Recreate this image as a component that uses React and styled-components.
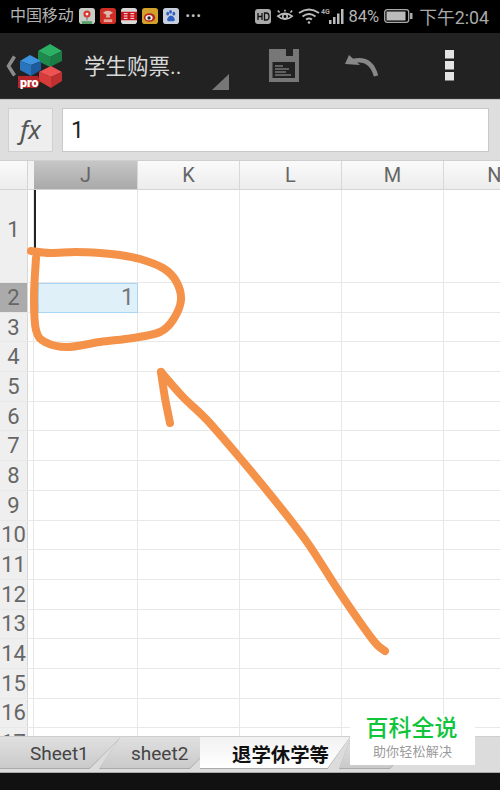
import React from "react";
import styled, { createGlobalStyle } from "styled-components";

const Global = createGlobalStyle`
  html, body { margin: 0; padding: 0; background: #111; }
  * { box-sizing: border-box; }
`;
const FONT = `"Roboto", "Noto Sans CJK SC", sans-serif`;

const Screen = styled.div`
  position: relative; width: 500px; height: 790px; overflow: hidden;
  display: flex; flex-direction: column; font-family: ${FONT}; background: #fff;
`;
const StatusBar = styled.div`
  height: 33px; flex: none; background: #000; color: #b4b4b4;
  display: flex; align-items: center; justify-content: space-between; padding: 0 11px 1px 10px; font-size: 15.5px;
`;
const StatusGroup = styled.div`
  display: flex; align-items: center;
`;
const Carrier = styled.span`
  margin-right: 5px; font-size: 16px; line-height: 1; letter-spacing: -0.1px;
`;
const AppIcon = styled.svg`
  width: 16px; height: 16px; flex: none; margin-right: 5px;
`;
const Dots = styled.span`
  margin-left: 2px; font-size: 13px; letter-spacing: 1px; color: #c4c4c4; line-height: 1; transform: translateY(-1px);
`;
const Percent = styled.span`
  font-size: 16.500px; margin: 0 5px 0 4px;
`;
const Clock = styled.span`
  font-size: 17.800px; margin-left: 6px; color: #aaa;
`;
const StatusGlyph = styled.svg`
  flex: none; margin-right: ${p => p.$mr ?? 0}px;
`;
const Toolbar = styled.div`
  height: 66px; flex: none; background: #222; border-bottom: 1px solid #333;
  display: flex; align-items: center; padding-left: 5px; position: relative;
`;
const Title = styled.span`
  color: #d8d8d8; font-size: 21.500px; margin-left: 20px; width: 114px; white-space: nowrap; transform: translateY(-1px);
`;
const Corner = styled.svg`
  width: 18px; height: 18px; flex: none; align-self: flex-end; margin: 0 0 7px 14px;
`;
const ToolIcon = styled.svg`
  flex: none; margin-left: ${p => p.$ml}px;
`;
const FormulaBar = styled.div`
  height: 62px; flex: none; background: #dedede; border-top: 1px solid #c4c4c4; border-bottom: 1px solid #cfcfcf;
  display: flex; align-items: center; padding: 0 11px 0 8px; gap: 9px;
`;
const FxButton = styled.div`
  width: 45px; height: 44px; flex: none; background: #eee; border: 1px solid #d0d0d0;
  font-family: "Noto Sans", sans-serif; font-style: italic; font-size: 26px; color: #555;
  display: flex; align-items: center; justify-content: center; padding-bottom: 3px;
`;
const FormulaInput = styled.div`
  flex: 1; height: 44px; background: #fff; border: 1px solid #c8c8c8; color: #222;
  font-size: 23px; display: flex; align-items: center; padding-left: 8px;
`;
const HeaderRow = styled.div`
  display: flex; height: 29px; flex: none; border-bottom: 1px solid #d4d4d4; overflow: hidden;
  background: linear-gradient(#fafafa, #ececec);
`;
const CornerCell = styled.div`
  width: 28px; flex: none; border-right: 1px solid #d4d4d4;
`;
const SpacerCell = styled.div`
  width: 6px; flex: none; background: #f3f3f3;
`;
const ColHead = styled.div`
  width: ${p => p.$w}px; flex: none; display: flex; align-items: center; justify-content: center;
  font-size: 20px; color: #666; border-right: 1px solid #d8d8d8;
  background: ${p => p.$active ? "linear-gradient(#c6c6c6, #a9a9a9)" : "none"};
`;
const Row = styled.div`
  display: flex; height: ${p => p.$h}px; flex: none; border-bottom: 1px solid #e8e8e8;
`;
const RowHead = styled.div`
  width: 28px; flex: none; background: ${p => p.$active ? "#ababab" : "#efefef"};
  border-right: 1px solid #d8d8d8; color: #666; font-size: 22px;
  display: flex; align-items: center; justify-content: center; padding-bottom: ${p => p.$lift ?? 0}px;
`;
const Spacer = styled.div`
  width: 6px; flex: none; background: #fff; border-right: 1px solid #e8e8e8;
  box-shadow: ${p => p.$cursor ? "2px 0 0 #222" : "none"};
`;
const Cell = styled.div`
  width: ${p => p.$w}px; flex: none; border-right: 1px solid #e8e8e8;
`;
const SelectedCell = styled(Cell)`
  background: #dff0f9; border: 1px solid #a9d6f5; margin-left: 4px; height: calc(100% + 1px);
  color: #777; font-size: 23px; text-align: right; padding: 0 3px 0 0; line-height: 27px;
`;
const Sheet = styled.div`
  flex: 1; min-height: 0; overflow: hidden;
`;
const TabBar = styled.div`
  position: relative; height: 37px; flex: none; background: #dcdcdc; display: flex;
  border-top: 1px solid #cfcfcf; border-bottom: 1px solid #aaa;
`;
const Tab = styled.div`
  position: relative; flex: none; width: ${p => p.$w}px; height: 32px; margin-left: ${p => p.$ml ?? 0}px;
  background: #aaa; clip-path: polygon(${p => p.$shape});
  display: flex; align-items: center; justify-content: flex-start;
  padding-left: ${p => p.$pl ?? 0}px;
  color: ${p => p.$active ? "#111" : "#444"}; font-size: ${p => p.$active ? 19.4 : 19}px; font-weight: ${p => p.$active ? 700 : 400};
  white-space: nowrap;
  &::before {
    content: ""; position: absolute; inset: 0 0 1px 0; clip-path: polygon(${p => p.$inner || p.$shape});
    background: ${p => p.$active ? "linear-gradient(#f2f2f2, #fff)" : "linear-gradient(#e0e0e0, #cacaca)"};
  }
`;
const TabLabel = styled.span`
  position: relative;
`;
const BottomBar = styled.div`
  height: 17px; flex: none; background: #111;
`;
const Watermark = styled.div`
  position: absolute; left: 350px; top: 715px; width: 125px; height: 50px; background: #fff;
  display: flex; flex-direction: column; align-items: center;
`;
const WmTitle = styled.span`
  color: #0fc53c; font-size: 23px; line-height: 28px; font-weight: 500; transform: translateX(-1px);
`;
const WmSub = styled.span`
  color: #9b9b9b; font-size: 13px; line-height: 17px; letter-spacing: 0.2px;
`;
const Scribble = styled.svg`
  position: absolute; left: 0; top: 0; pointer-events: none;
`;

const COLS = [{ n: "J", w: 104 }, { n: "K", w: 102 }, { n: "L", w: 102 }, { n: "M", w: 102 }, { n: "N", w: 102 }];
const ROW_COUNT = 17;

// Smooth a hand-drawn stroke through its sampled points.
const smooth = pts => {
  let d = `M${pts[0][0]} ${pts[0][1]}`;
  for (let i = 0; i < pts.length - 1; i++) {
    const a = pts[Math.max(i - 1, 0)], b = pts[i], c = pts[i + 1], e = pts[Math.min(i + 2, pts.length - 1)];
    d += `C${b[0] + (c[0] - a[0]) / 6} ${b[1] + (c[1] - a[1]) / 6} ${c[0] - (e[0] - b[0]) / 6} ${c[1] - (e[1] - b[1]) / 6} ${c[0]} ${c[1]}`;
  }
  return d;
};
const LOOP = [[31, 251], [50, 253], [75, 252], [100, 253], [120, 255], [140, 259], [163, 268], [176, 281], [181, 300], [173, 320], [160, 332], [133, 338], [100, 342], [67, 347], [45, 342], [36, 330], [34, 297], [36, 258]];
const ARROW_HEAD = [[170, 423], [165, 398], [161, 372]];
const ARROW_SHAFT = [[161, 372], [183, 397], [207, 420], [240, 458], [273, 498], [307, 542], [340, 593], [373, 640], [385, 651]];

export default function App() {
  return (
    <Screen>
      <Global />
      <StatusBar>
        <StatusGroup>
          <Carrier>中国移动</Carrier>
          <AppIcon viewBox="0 0 17 17">
            <rect width="17" height="17" rx="3" fill="#c9cdc8" />
            <circle cx="8.500" cy="6.500" r="3.800" fill="#d8392f" /><circle cx="8.500" cy="6.500" r="1.500" fill="#eee" />
            <path d="M8.500 10v3" stroke="#777" strokeWidth="1.200" /><path d="M3 14h11v3H3z" fill="#5aa06a" />
          </AppIcon>
          <AppIcon viewBox="0 0 17 17">
            <rect width="17" height="17" rx="3" fill="#cf2e24" />
            <path d="M3 5q5-4 11 0q-3 1-4 3l1 2H6l1-2Q6 6 3 5z" fill="#ddb6ae" /><path d="M4 12h9v3H4z" fill="#e9a297" />
          </AppIcon>
          <AppIcon viewBox="0 0 17 17">
            <rect width="17" height="17" rx="3" fill="#d9d9d9" />
            <rect y="4" width="17" height="9" fill="#c8141a" />
            <path d="M3 6h4M3 8.500h4M3 11h4M10 6h4M10 8.500h4M10 11h4" stroke="#fff" strokeWidth="1" />
          </AppIcon>
          <AppIcon viewBox="0 0 17 17">
            <rect width="17" height="17" rx="3" fill="#d3a22b" />
            <ellipse cx="8" cy="10" rx="6" ry="4.500" fill="#b8251f" /><ellipse cx="7.500" cy="10.300" rx="3.800" ry="2.800" fill="#eee" /><circle cx="7.500" cy="10.500" r="1.700" fill="#222" />
          </AppIcon>
          <AppIcon viewBox="0 0 17 17">
            <rect width="17" height="17" rx="3" fill="#c8d0de" />
            <g fill="#2f5fc0"><ellipse cx="5" cy="6" rx="1.500" ry="2" /><ellipse cx="8" cy="4" rx="1.500" ry="2" /><ellipse cx="11.500" cy="6" rx="1.500" ry="2" /><path d="M8.500 8c-2 0-4.500 3-4 5 .5 1.500 2.500 1 4 1s3.500.5 4-1c.5-2-2-5-4-5z" /></g>
          </AppIcon>
          <Dots>•••</Dots>
        </StatusGroup>
        <StatusGroup>
          <StatusGlyph $mr={5} width="16" height="15" viewBox="0 0 16 15">
            <rect width="16" height="15" rx="3" fill="#aaa" />
            <path d="M3 4v7M7 4v7M3 7.500h4M9.500 4v7h1.500q3 0 3-3.500T11 4z" stroke="#111" strokeWidth="1.300" fill="none" />
          </StatusGlyph>
          <StatusGlyph $mr={4} width="18" height="15" viewBox="0 0 20 15" fill="none" stroke="#bbb" strokeWidth="1.800">
            <path d="M2 7q8-6 16 0q-8 7-16 0z" /><circle cx="10" cy="7.500" r="2.500" /><path d="M4 3L2 1M10 2V0M16 3l2-2" />
          </StatusGlyph>
          <StatusGlyph $mr={1} width="22" height="16" viewBox="0 0 22 16" fill="none" stroke="#bbb" strokeWidth="1.800">
            <path d="M1 5q10-7 20 0M4.500 8.500q6.500-5 13 0M8 11.500q3-2 6 0" /><circle cx="11" cy="14.500" r="1.300" fill="#bbb" stroke="none" />
          </StatusGlyph>
          <StatusGlyph width="24" height="18" viewBox="0 0 24 18">
            <text x="0" y="6.500" fontSize="7" fontWeight="700" fill="#aaa" fontFamily="Roboto">4G</text>
            <path d="M8 13h2.500v4H8zM12 10h2.500v7H12zM16 6.500h2.500V17H16zM20 2h2.500v15H20z" fill="#bbb" />
          </StatusGlyph>
          <Percent>84%</Percent>
          <StatusGlyph width="29" height="14" viewBox="0 0 29 14">
            <rect x="0.700" y="0.700" width="24" height="12.600" rx="2.500" fill="none" stroke="#aaa" strokeWidth="1.300" />
            <rect x="2.500" y="2.500" width="19" height="9" fill="#bbb" />
            <rect x="26" y="4" width="2.500" height="6" fill="#aaa" />
          </StatusGlyph>
          <Clock>下午2:04</Clock>
        </StatusGroup>
      </StatusBar>
      <Toolbar>
        <StatusGlyph width="13" height="22" viewBox="0 0 13 22">
          <path d="M9.500 1.500L3.500 11l6 9.500" fill="none" stroke="#8c8c8c" strokeWidth="3.500" />
        </StatusGlyph>
        <StatusGlyph width="46" height="46" viewBox="17 44 46 46">
          <path d="M49 45l12 7-12 6-12-6z" fill="#2bb064" /><path d="M37 52l12 6v10l-12-6z" fill="#1e8a4c" /><path d="M61 52l-12 6v10l12-6z" fill="#1b7c44" />
          <path d="M29 56l11 6-10 4-11-4z" fill="#3c92dc" /><path d="M19 62l11 4v11l-11-6z" fill="#2a74bd" /><path d="M40 62l-10 4v11l10-6z" fill="#1c5c9c" />
          <path d="M50 67l11 6-11 5-12-5z" fill="#ee5252" /><path d="M38 73l12 5v11l-12-7z" fill="#d83c3a" /><path d="M61 73l-11 5v11l11-7z" fill="#bf3030" />
          <path d="M17 77h20l2 5-3 7H17z" fill="#b5252a" />
          <text x="19" y="87.500" fontSize="12.500" fontWeight="900" fill="#fff" fontFamily="Roboto">pro</text>
        </StatusGlyph>
        <Title>学生购票..</Title>
        <Corner viewBox="0 0 18 18"><path d="M17 1v16H0z" fill="#777" /></Corner>
        <ToolIcon $ml={39} width="30" height="33" viewBox="0 0 30 33">
          <path d="M0 0h30v33H0z" fill="#777" />
          <path d="M17 0h7v7h-7z" fill="#222" />
          <path d="M3.500 13H26v16H3.500z" fill="#222" />
          <path d="M6 17h8M6 20h14M6 23h11M6 26h16" stroke="#777" strokeWidth="1.500" />
        </ToolIcon>
        <ToolIcon $ml={46} width="33" height="22" viewBox="0 0 33 22" >
          <path d="M0 9L4 0l11 10z" fill="#888" />
          <path d="M8 6Q26 2 31 21" fill="none" stroke="#888" strokeWidth="4.500" />
        </ToolIcon>
        <ToolIcon $ml={67} width="9" height="31" viewBox="0 0 9 31">
          <path d="M0 0h9v8.500H0zM0 11h9v8.500H0zM0 22h9v8.500H0z" fill="#e4e4e4" />
        </ToolIcon>
      </Toolbar>
      <FormulaBar>
        <FxButton>fx</FxButton>
        <FormulaInput>1</FormulaInput>
      </FormulaBar>
      <HeaderRow>
        <CornerCell />
        <SpacerCell />
        {COLS.map((c, i) => <ColHead key={c.n} $w={c.w} $active={i === 0}>{c.n}</ColHead>)}
      </HeaderRow>
      <Sheet>
        {Array.from({ length: ROW_COUNT }, (_, i) => {
          const r = i + 1;
          return (
            <Row key={r} $h={r === 1 ? 93 : 29.7}>
              <RowHead $active={r === 2} $lift={r === 1 ? 13 : 0}>{r}</RowHead>
              <Spacer $cursor={r === 1} />
              {r === 2 ? <SelectedCell $w={100}>1</SelectedCell> : <Cell $w={COLS[0].w} />}
              {COLS.slice(1).map(c => <Cell key={c.n} $w={c.w} />)}
            </Row>
          );
        })}
      </Sheet>
      <TabBar>
        <Tab $w={121} $pl={30} $shape="0 0, 100% 0, 74% 100%, 0 100%"><TabLabel>Sheet1</TabLabel></Tab>
        <Tab $w={101} $ml={-22} $pl={32} $shape="21% 0, 100% 0, 100% 68%, 90% 100%, 0 100%"><TabLabel>sheet2</TabLabel></Tab>
        <Tab $w={150} $active $pl={32} $shape="0 0, 100% 0, 85% 100%, 0 100%"><TabLabel>退学休学等</TabLabel></Tab>
        <Tab $w={60} $ml={-11} $shape="20% 0, 100% 0, 100% 68%, 85% 100%, 0 100%" />
      </TabBar>
      <BottomBar />
      <Watermark>
        <WmTitle>百科全说</WmTitle>
        <WmSub>助你轻松解决</WmSub>
      </Watermark>
      <Scribble width="500" height="790" viewBox="0 0 500 790" fill="none" stroke="#f5924a" strokeLinecap="round" strokeLinejoin="round" strokeWidth="8">
        <path d={smooth(LOOP)} />
        <path d={smooth(ARROW_HEAD)} />
        <path d={smooth(ARROW_SHAFT)} />
      </Scribble>
    </Screen>
  );
}
